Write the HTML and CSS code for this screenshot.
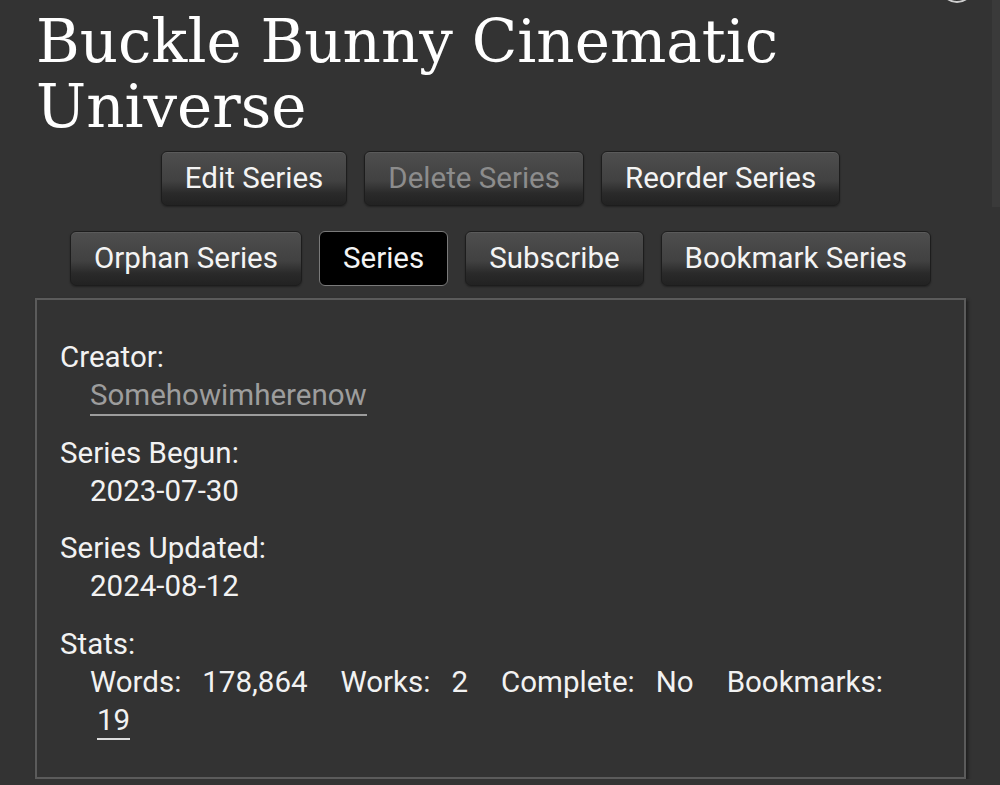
FILE: index.html
```html
<!DOCTYPE html>
<html lang="en">
<head>
  <meta charset="UTF-8">
  <title>Buckle Bunny Cinematic Universe</title>
  <link rel="stylesheet" href="styles.css">
</head>
<body>
  <span class="menu-ring"></span>
  <span class="scroll-thumb"></span>
  <div class="page">
    <h2 class="heading">Buckle Bunny Cinematic Universe</h2>

    <ul class="navigation">
      <li><a class="button" href="#">Edit Series</a></li>
      <li><span class="button disabled">Delete Series</span></li>
      <li><a class="button" href="#">Reorder Series</a></li>
    </ul>

    <ul class="navigation">
      <li><a class="button" href="#">Orphan Series</a></li>
      <li><span class="button current">Series</span></li>
      <li><a class="button" href="#">Subscribe</a></li>
      <li><a class="button" href="#">Bookmark Series</a></li>
    </ul>

    <div class="series-meta">
      <dl class="meta">
        <dt>Creator:</dt>
        <dd><a class="creator" href="#">Somehowimherenow</a></dd>
        <dt>Series Begun:</dt>
        <dd>2023-07-30</dd>
        <dt>Series Updated:</dt>
        <dd>2024-08-12</dd>
        <dt>Stats:</dt>
        <dd>
          <dl class="stats">
            <dt>Words:</dt><dd>178,864</dd>
            <dt>Works:</dt><dd>2</dd>
            <dt>Complete:</dt><dd>No</dd>
            <dt>Bookmarks:</dt><dd><a class="count" href="#">19</a></dd>
          </dl>
        </dd>
      </dl>
    </div>
  </div>
</body>
</html>
```

FILE: styles.css
```css
body {
  margin: 0;
  background: #333333;
  color: #f2f2f2;
  font-family: Roboto, 'Noto Sans', sans-serif;
  font-size: 29.5px;
  line-height: 38px;
}
a {
  color: inherit;
  text-decoration: none;
}
.page {
  padding: 10px 34px 0 35px;
}
.heading {
  margin: 0 0 12px;
  padding-left: 1px;
  font-family: 'DejaVu Serif', serif;
  font-weight: normal;
  font-size: 59.5px;
  line-height: 64.5px;
  color: #ffffff;
}
.navigation {
  list-style: none;
  margin: 0 0 25px;
  padding: 0;
  display: flex;
  justify-content: center;
  gap: 17px;
}
.navigation:last-of-type {
  margin-bottom: 12px;
}
.button {
  display: block;
  padding: 10px 23px;
  line-height: 33px;
  border: 1px solid #1d1d1d;
  border-radius: 6px;
  color: #f4f4f4;
  background: linear-gradient(#4e4e4e 0%, #414141 55%, #2a2a2a 78%, #222222 100%);
  box-shadow: inset 0 1px 0 rgba(255, 255, 255, 0.08), 0 1px 2px rgba(0, 0, 0, 0.35);
}
.button.disabled {
  color: #8c8c8c;
}
.button.current {
  background: #000000;
  border-color: #7a7a7a;
  box-shadow: none;
}
.series-meta {
  border: 2px solid #5b5b5b;
  box-shadow: 2px 2px 3px #1e1e1e;
  padding: 38px 23px 38px;
}
.meta,
.stats {
  margin: 0;
}
.meta dt {
  margin: 0;
}
.meta > dd {
  margin: 0 0 19.5px 30px;
}
.meta > dd:last-child {
  margin-bottom: 0;
}
.creator {
  color: #9d9d9d;
  padding-bottom: 2px;
  border-bottom: 2px solid #9d9d9d;
}
.stats {
  display: flex;
  flex-wrap: wrap;
  padding-right: 30px;
}
.stats dt {
  margin-right: 14px;
}
.stats dd {
  margin: 0 33px 0 0;
  padding-left: 7px;
}
.count {
  padding-bottom: 1px;
  border-bottom: 2px solid #dcdcdc;
}
.menu-ring {
  position: absolute;
  left: 940px;
  top: -31px;
  width: 30px;
  height: 30px;
  border: 2px solid #cfcfcf;
  border-radius: 50%;
}
.scroll-thumb {
  position: absolute;
  right: 0;
  top: 0;
  width: 8px;
  height: 207px;
  background: #3a3a3a;
}
```
